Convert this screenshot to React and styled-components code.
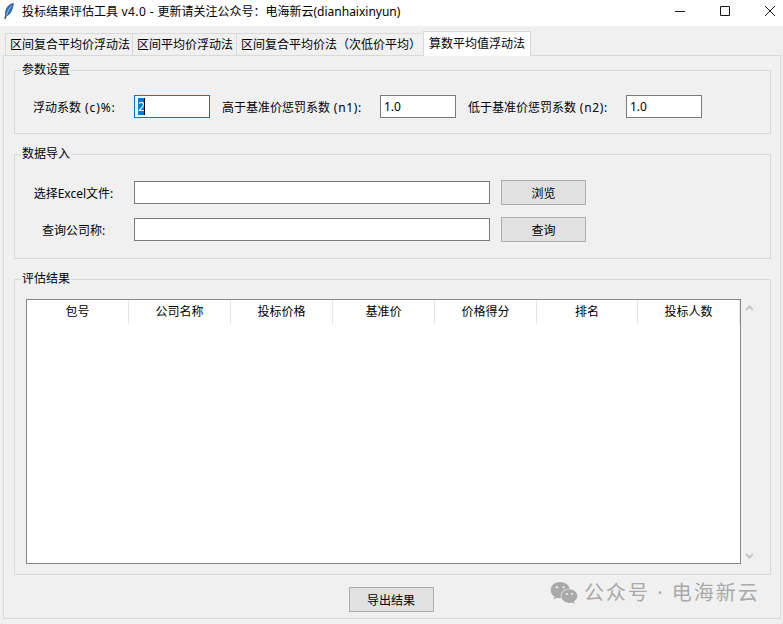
import React, { useEffect, useRef } from 'react'
import styled, { createGlobalStyle } from 'styled-components'
import { FaWeixin } from 'react-icons/fa'

const GlobalStyle = createGlobalStyle`
  html, body {
    margin: 0;
    padding: 0;
    background: #f0f0f0;
  }
  * {
    box-sizing: border-box;
  }
`

const tabs = [
  { label: '区间复合平均价浮动法', width: 127 },
  { label: '区间平均价浮动法', width: 104 },
  { label: '区间复合平均价法（次低价平均）', width: 186 },
  { label: '算数平均值浮动法', width: 108, active: true },
]

const columns = ['包号', '公司名称', '投标价格', '基准价', '价格得分', '排名', '投标人数']

const App = () => {
  const rateInput = useRef(null)

  useEffect(() => {
    rateInput.current.focus()
    rateInput.current.select()
  }, [])

  return (
    <Window lang="zh-CN">
      <GlobalStyle />

      <TitleBar>
        <AppIcon viewBox="0 0 10 16">
          <path d="M9.300 .5C6.500 .8 3.200 3.200 2 7c-.6 2-.7 3.800-.4 5.300L.7 15.500l.7.2.9-2.900C4.500 12.300 6.200 10.500 7.300 8 8.400 5.500 9.200 3 9.300 .5Z" fill="#2f74c8" stroke="#12304f" strokeWidth=".6" />
          <path d="M7.600 2.600C5.600 5 3.700 8.300 2.500 12" stroke="#cfe2f5" strokeWidth=".7" fill="none" />
        </AppIcon>
        <Title>投标结果评估工具<Latin $spacing={0.4}> v4.0 - </Latin>更新请关注公众号：电海新云(dianhaixinyun)</Title>
        <WindowControls>
          <ControlIcon viewBox="0 0 10 10">
            <path d="M0 5.500H10" />
          </ControlIcon>
          <ControlIcon viewBox="0 0 10 10">
            <path d="M.5 .5H9.500V9.500H.5Z" />
          </ControlIcon>
          <ControlIcon viewBox="0 0 10 10">
            <path d="M0 0L10 10M10 0L0 10" />
          </ControlIcon>
        </WindowControls>
      </TitleBar>

      <TabBar>
        {tabs.map(tab => (
          <Tab key={tab.label} $width={tab.width} $active={tab.active}>{tab.label}</Tab>
        ))}
      </TabBar>

      <Pane>
        <Group>
          <Legend>参数设置</Legend>
          <ParamRow>
            <ParamLabel $width={101}>浮动系数<Latin $spacing={0.9}> (c)%:</Latin></ParamLabel>
            <RateField>
              <TextInput ref={rateInput} $width={76} defaultValue="2" />
              <Caret />
            </RateField>
            <ParamLabel $width={158} $gap={12}>高于基准价惩罚系数<Latin $spacing={0.7}> (n1):</Latin></ParamLabel>
            <TextInput $width={76} defaultValue="1.0" />
            <ParamLabel $width={158} $gap={12}>低于基准价惩罚系数<Latin $spacing={0.7}> (n2):</Latin></ParamLabel>
            <TextInput $width={76} defaultValue="1.0" />
          </ParamRow>
        </Group>

        <Group>
          <Legend>数据导入</Legend>
          <ImportRows>
            <ImportRow>
              <ImportLabel>选择Excel文件:</ImportLabel>
              <TextInput $width={356} />
              <Button>浏览</Button>
            </ImportRow>
            <ImportRow>
              <ImportLabel>查询公司称:</ImportLabel>
              <TextInput $width={356} />
              <Button>查询</Button>
            </ImportRow>
          </ImportRows>
        </Group>

        <Group>
          <Legend>评估结果</Legend>
          <ResultArea>
            <Tree>
              <TreeHeader>
                {columns.map(column => (
                  <HeaderCell key={column}>{column}</HeaderCell>
                ))}
              </TreeHeader>
            </Tree>
            <ScrollBar>
              <ScrollArrow viewBox="0 0 9 6">
                <path d="M1 5L4.500 1.500L8 5" />
              </ScrollArrow>
              <ScrollArrow viewBox="0 0 9 6">
                <path d="M1 1L4.500 4.500L8 1" />
              </ScrollArrow>
            </ScrollBar>
          </ResultArea>
        </Group>

        <Footer>
          <Button>导出结果</Button>
        </Footer>
      </Pane>

      <Watermark>
        <FaWeixin size={28} />
        <WatermarkText>公众号 · 电海新云</WatermarkText>
      </Watermark>
    </Window>
  )
}

const Window = styled.div`
  position: relative;
  width: 783px;
  height: 624px;
  overflow: hidden;
  background: #f0f0f0;
  color: #000;
  font-family: "Noto Sans", "Noto Sans CJK SC", sans-serif;
  font-size: 12px;
`

const Latin = styled.span`
  letter-spacing: ${props => props.$spacing}px;
`

const TitleBar = styled.div`
  display: flex;
  align-items: center;
  height: 26px;
  padding-left: 4px;
  background: #fff;
`

const AppIcon = styled.svg`
  width: 10px;
  height: 16px;
  margin-right: 8px;
  margin-bottom: 4px;
`

const Title = styled.div`
  flex: 1;
  margin-bottom: 2px;
  line-height: 22px;
  white-space: nowrap;
`

const WindowControls = styled.div`
  display: flex;
  gap: 35px;
  padding-right: 8px;
  margin-bottom: 4px;
`

const ControlIcon = styled.svg`
  width: 10px;
  height: 10px;
  fill: none;
  stroke: #1a1a1a;
  stroke-width: 1;
`

const TabBar = styled.div`
  display: flex;
  align-items: flex-end;
  height: 29px;
  padding: 5px 0 0 5px;
`

const Tab = styled.div`
  position: relative;
  z-index: 1;
  width: ${props => props.$width}px;
  height: ${props => (props.$active ? 25 : 22)}px;
  margin-left: ${props => (props.$active ? 1 : 0)}px;
  margin-bottom: ${props => (props.$active ? -1 : 0)}px;
  padding-left: ${props => (props.$active ? 5 : 4)}px;
  border: 1px solid #d9d9d9;
  border-right-width: ${props => (props.$active ? 1 : 0)}px;
  border-bottom: none;
  background: ${props => (props.$active ? '#fff' : '#f0f0f0')};
  line-height: ${props => (props.$active ? 23 : 22)}px;
  white-space: nowrap;
`

const Pane = styled.div`
  width: 778px;
  height: 564px;
  margin-left: 3px;
  padding: 6px 10px 0;
  border: 1px solid #d9d9d9;
`

const Group = styled.fieldset`
  width: 757px;
  min-width: 0;
  margin: 0 0 12px;
  padding: 0;
  border: 1px solid #d9d9d9;
`

const Legend = styled.legend`
  margin-left: 6px;
  padding: 0 1px;
  line-height: 16px;
`

const ParamRow = styled.div`
  display: flex;
  align-items: center;
  height: 23px;
  margin: 17px 0 15px;
  padding-left: 18px;
`

const ParamLabel = styled.label`
  flex: none;
  width: ${props => props.$width}px;
  margin-left: ${props => props.$gap || 0}px;
  white-space: nowrap;
`

const RateField = styled.div`
  position: relative;
  display: flex;
  flex: none;
`

const Caret = styled.span`
  position: absolute;
  left: 10px;
  top: 3px;
  width: 1px;
  height: 17px;
  background: #000;
`

const TextInput = styled.input`
  flex: none;
  width: ${props => props.$width}px;
  height: 23px;
  padding: 0 3px;
  border: 1px solid #7a7a7a;
  border-radius: 0;
  outline: none;
  background: #fff;
  color: #000;
  font: inherit;

  &:focus {
    border-color: #0078d7;
  }

  &::selection {
    background: #0078d7;
    color: #fff;
  }
`

const ImportRows = styled.div`
  display: flex;
  flex-direction: column;
  gap: 12px;
  padding: 18px 0 16px 18px;
`

const ImportRow = styled.div`
  display: flex;
  align-items: center;
  height: 25px;
`

const ImportLabel = styled.label`
  width: 81px;
  margin-right: 20px;
  text-align: center;
  white-space: nowrap;
`

const Button = styled.button`
  width: 85px;
  height: 25px;
  margin-left: 11px;
  padding: 0;
  border: 1px solid #adadad;
  border-radius: 0;
  background: #e1e1e1;
  color: #000;
  font: inherit;
`

const ResultArea = styled.div`
  display: flex;
  height: 265px;
  margin: 12px 11px 10px;
`

const Tree = styled.div`
  width: 715px;
  border: 1px solid #828790;
  background: #fff;
`

const TreeHeader = styled.div`
  display: grid;
  grid-template-columns: repeat(5, 102px) 101px 102px;
  height: 24px;
`

const HeaderCell = styled.div`
  border-right: 1px solid #e5e5e5;
  line-height: 23px;
  text-align: center;
`

const ScrollBar = styled.div`
  display: flex;
  flex-direction: column;
  justify-content: space-between;
  align-items: center;
  width: 17px;
  padding: 6px 0 5px;
`

const ScrollArrow = styled.svg`
  width: 9px;
  height: 6px;
  fill: none;
  stroke: #c8c8c8;
  stroke-width: 2;
`

const Footer = styled.div`
  display: flex;
  justify-content: center;
  padding-right: 13px;
`

const Watermark = styled.div`
  position: absolute;
  left: 550px;
  top: 579px;
  display: flex;
  align-items: center;
  gap: 6px;
  color: #a9a9a9;
`

const WatermarkText = styled.span`
  font-size: 20px;
  letter-spacing: 2px;
  line-height: 28px;
  white-space: nowrap;
`

export default App
